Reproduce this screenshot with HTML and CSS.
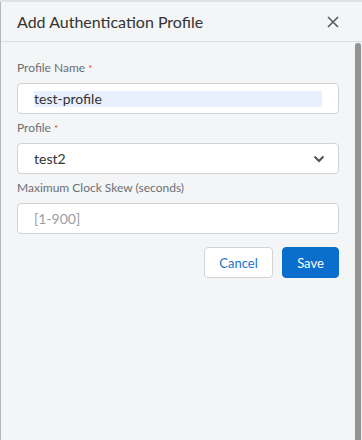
FILE: index.html
```html
<!DOCTYPE html>
<html lang="en">
<head>
  <meta charset="UTF-8">
  <meta name="viewport" content="width=device-width, initial-scale=1.0">
  <title>Add Authentication Profile</title>
  <link rel="stylesheet" href="styles.css">
</head>
<body>
  <div class="strip"></div>
  <div class="dialog">
    <div class="header">
      <h2>Add Authentication Profile</h2>
      <button class="close" type="button" aria-label="Close">
        <svg width="12" height="12" viewBox="0 0 12 12"><path d="M1 1L11 11M11 1L1 11" stroke="#555c63" stroke-width="1.6" fill="none"/></svg>
      </button>
    </div>
    <div class="main">
      <form class="content">
        <div class="field">
          <label for="name">Profile Name <span class="req">*</span></label>
          <div class="box"><input id="name" class="fill" type="text" value="test-profile"></div>
        </div>
        <div class="field">
          <label>Profile <span class="req">*</span></label>
          <div class="box select">
            <span>test2</span>
            <svg width="12" height="8" viewBox="0 0 12 8"><path d="M1.5 1.5L6 6L10.5 1.5" stroke="#4a5560" stroke-width="2" fill="none"/></svg>
          </div>
        </div>
        <div class="field">
          <label for="skew">Maximum Clock Skew (seconds)</label>
          <div class="box"><input id="skew" type="text" placeholder="[1-900]"></div>
        </div>
        <div class="actions">
          <button type="button" class="btn cancel">Cancel</button>
          <button type="submit" class="btn save">Save</button>
        </div>
      </form>
      <div class="scrollbar"><div class="thumb"></div></div>
    </div>
  </div>
</body>
</html>
```

FILE: styles.css
```css
*{box-sizing:border-box;margin:0;padding:0;font-family:Lato,"Open Sans",sans-serif}
html,body{height:100%}
body{background:#f3f5f6;display:flex;flex-direction:column;overflow:hidden}
.strip{height:2px;background:#dfe2e5;flex:none}
.dialog{flex:1;display:flex;flex-direction:column;border-left:1px solid #b3b8bd}
.header{height:40px;display:flex;align-items:center;justify-content:space-between;padding:0 23px 0 16px;border-bottom:1px solid #dcdfe2;flex:none}
.header h2{font-size:16px;font-weight:400;color:#333}
.close{background:none;border:none;display:flex;cursor:pointer}
.main{flex:1;display:flex}
.content{flex:1;padding:18px 16px 0 16px;display:flex;flex-direction:column;gap:6px}
.field label{display:block;font-size:12px;line-height:16px;color:#6b7075;margin-bottom:7px}
.req{color:#e2463c;font-size:10px;vertical-align:top}
.box{height:31px;background:#fff;border:1px solid #cfd3d7;border-radius:4px;padding:0 16px;display:flex;align-items:center}
.box input{border:none;outline:none;width:100%;font-size:14px;color:#333;background:transparent}
.box input.fill{background:#e8f0fe;height:16px}
.box input::placeholder{color:#9a9ea2}
.select{justify-content:space-between;font-size:14px;color:#333;padding-right:13px}
.actions{display:flex;justify-content:flex-end;gap:9px;margin-top:7px}
.btn{height:31px;border-radius:4px;font-size:13px;padding:0 12px;cursor:pointer}
.cancel{width:69px;background:#fff;border:1px solid #cfd3d7;color:#1a72c8}
.save{width:57px;background:#0a6fcc;border:1px solid #0a6fcc;color:#fff}
.scrollbar{width:7px;padding-top:1px;flex:none;background:#eceeef}
.thumb{width:6px;height:100%;background:#939393;border-radius:3px 3px 0 0}
```
